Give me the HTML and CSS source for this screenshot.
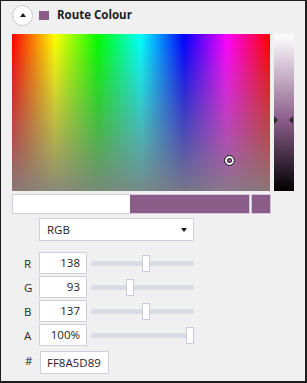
FILE: index.html
```html
<!DOCTYPE html>
<html>
<head>
<meta charset="utf-8">
<link rel="stylesheet" href="styles.css">
</head>
<body>
<div class="panel">
  <div class="header">
    <div class="toggle"><span class="tri-up"></span></div>
    <div class="swatch"></div>
    <div class="title">Route Colour</div>
  </div>
  <div class="picker">
    <div class="spectrum">
      <div class="cursor"></div>
    </div>
    <div class="lightness">
      <span class="arrow arrow-left"></span>
      <span class="arrow arrow-right"></span>
    </div>
  </div>
  <div class="preview">
    <div class="compare">
      <div class="old"></div>
      <div class="new"></div>
    </div>
    <div class="current"></div>
  </div>
  <div class="mode">
    <div class="select">
      <span>RGB</span>
      <span class="tri-down"></span>
    </div>
  </div>
  <div class="channels">
    <div class="channel">
      <span class="label">R</span>
      <div class="field">138</div>
      <div class="slider"><div class="track"></div><div class="thumb" style="left:51px"></div></div>
    </div>
    <div class="channel">
      <span class="label">G</span>
      <div class="field">93</div>
      <div class="slider"><div class="track"></div><div class="thumb" style="left:35px"></div></div>
    </div>
    <div class="channel">
      <span class="label">B</span>
      <div class="field">137</div>
      <div class="slider"><div class="track"></div><div class="thumb" style="left:51px"></div></div>
    </div>
    <div class="channel">
      <span class="label">A</span>
      <div class="field">100%</div>
      <div class="slider"><div class="track"></div><div class="thumb" style="left:95px"></div></div>
    </div>
  </div>
  <div class="hex-row">
    <span class="label hash">#</span>
    <div class="hex">FF8A5D89</div>
  </div>
</div>
</body>
</html>
```

FILE: styles.css
```css
* { box-sizing: border-box; }
html, body { margin: 0; padding: 0; background: #f0f0f0; }
.panel {
  width: 307px;
  height: 383px;
  border: 1px solid #1e1e1e;
  border-right-width: 2px;
  border-bottom-width: 2px;
  background: #f0f0f0;
  font-family: "Open Sans", "Noto Sans", sans-serif;
  color: #1e1e1e;
  padding: 3px 0 0 11px;
}
.header {
  display: flex;
  align-items: center;
  height: 22px;
}
.toggle {
  width: 21px;
  height: 21px;
  border-radius: 50%;
  border: 1px solid #c9c9cf;
  background: #ffffff;
  display: flex;
  align-items: center;
  justify-content: center;
}
.tri-up {
  width: 0; height: 0;
  border-left: 3.5px solid transparent;
  border-right: 3.5px solid transparent;
  border-bottom: 4px solid #1a1a1a;
  margin-top: -1px;
}
.swatch {
  width: 10px;
  height: 9px;
  background: #8a5d89;
  margin-left: 6px;
}
.title {
  font-weight: 700;
  font-size: 11.5px;
  margin-left: 8px;
  color: #1c1c1c;
  margin-top: -1px;
}
.picker {
  display: flex;
  gap: 4px;
  margin-top: 8px;
}
.spectrum {
  position: relative;
  width: 258px;
  height: 157px;
  background:
    linear-gradient(to bottom, rgba(128,128,128,0) 0%, rgba(128,128,128,0.92) 100%),
    linear-gradient(to right, #ff0000 0%, #ffff00 16.67%, #00ff00 33.33%, #00ffff 50%, #0000ff 66.67%, #ff00ff 83.33%, #ff0000 100%);
}
.cursor {
  position: absolute;
  left: 212px;
  top: 121px;
  width: 11px;
  height: 11px;
  border-radius: 50%;
  border: 1px solid #222;
  box-shadow: inset 0 0 0 2px #ffffff, inset 0 0 0 3px #222;
}
.lightness {
  position: relative;
  width: 20px;
  height: 157px;
  background: linear-gradient(to bottom, #ffffff 0%, #8a5d89 55%, #000000 100%);
}
.arrow {
  position: absolute;
  top: 82px;
  width: 0; height: 0;
  border-top: 4px solid transparent;
  border-bottom: 4px solid transparent;
}
.arrow-left { left: 0; border-left: 4px solid #2a2a2a; }
.arrow-right { right: 1px; border-right: 4px solid #2a2a2a; }
.preview {
  display: flex;
  gap: 1px;
  margin-top: 3px;
  height: 20px;
}
.compare {
  display: flex;
  width: 238px;
  border: 1px solid #cdcbdc;
}
.old { width: 117px; background: #ffffff; }
.new { flex: 1; background: #8a5d89; }
.current {
  width: 20px;
  background: #8a5d89;
  border: 1px solid #cdcbdc;
}
.mode {
  margin-top: 4px;
  padding-left: 27px;
}
.select {
  width: 155px;
  height: 23px;
  border: 1px solid #cfcfdb;
  background: #ffffff;
  display: flex;
  align-items: center;
  justify-content: space-between;
  padding: 0 6px 0 7px;
  font-size: 11.5px;
}
.tri-down {
  width: 0; height: 0;
  border-left: 3.5px solid transparent;
  border-right: 3.5px solid transparent;
  border-top: 4px solid #1a1a1a;
}
.channels {
  margin-top: 11px;
  display: flex;
  flex-direction: column;
  gap: 2px;
}
.channel {
  display: flex;
  align-items: center;
  height: 22px;
}
.label {
  width: 27px;
  padding-left: 12px;
  font-size: 11.5px;
  color: #2a2a2a;
}
.field {
  width: 48px;
  height: 22px;
  border: 1px solid #cfcfdb;
  background: #ffffff;
  font-size: 11.5px;
  text-align: right;
  padding-right: 6px;
  line-height: 20px;
}
.slider {
  position: relative;
  width: 103px;
  height: 17px;
  margin-left: 4px;
}
.track {
  position: absolute;
  left: 0; right: 0;
  top: 6px;
  height: 5px;
  background: #dadde6;
}
.thumb {
  position: absolute;
  top: 0;
  width: 8px;
  height: 17px;
  background: #ffffff;
  border: 1px solid #cacad8;
}
.hex-row {
  display: flex;
  align-items: center;
  margin-top: 5px;
}
.hash { padding-left: 13px; width: 28px; margin-top: -4px; }
.hex {
  width: 69px;
  height: 23px;
  border: 1px solid #cfcfdb;
  background: #ffffff;
  font-size: 11.5px;
  line-height: 21px;
  padding-left: 6px;
  color: #2a1a2a;
}
```
